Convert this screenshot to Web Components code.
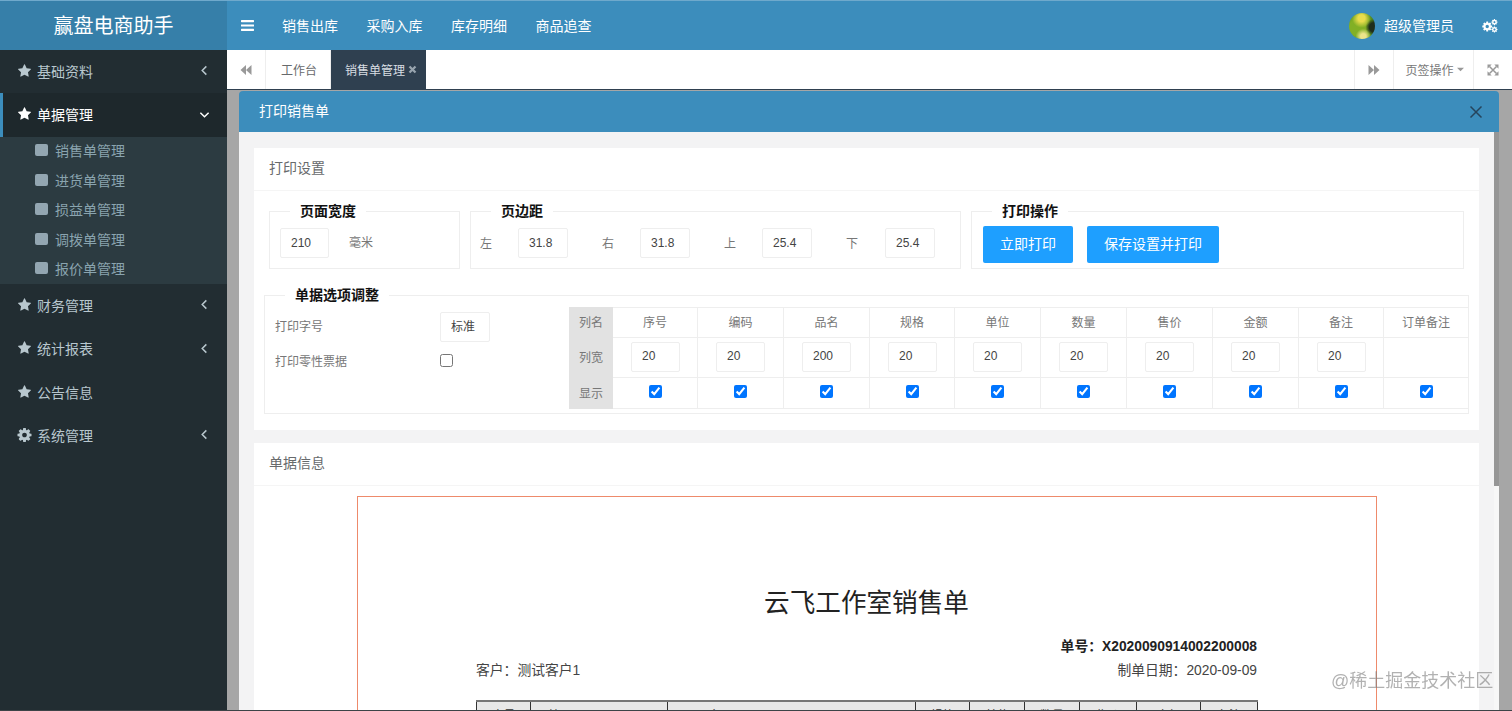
<!DOCTYPE html>
<html lang="zh-CN">
<head>
<meta charset="utf-8">
<title>打印销售单</title>
<style>
html,body{margin:0;height:100%;overflow:hidden}
body{font-family:"Liberation Sans","Noto Sans CJK SC",sans-serif;background:#a6a6a6}
</style>
</head>
<body>
<x-app>
  <x-logo slot="logo">赢盘电商助手</x-logo>
  <x-topbar slot="top"></x-topbar>
  <x-sidebar slot="side">
    <x-nav-item icon="star" arrow="left">基础资料</x-nav-item>
    <x-nav-item icon="star" arrow="down" active>单据管理</x-nav-item>
    <x-sub-menu>
      <x-sub-item>销售单管理</x-sub-item>
      <x-sub-item>进货单管理</x-sub-item>
      <x-sub-item>损益单管理</x-sub-item>
      <x-sub-item>调拨单管理</x-sub-item>
      <x-sub-item>报价单管理</x-sub-item>
    </x-sub-menu>
    <x-nav-item icon="star" arrow="left">财务管理</x-nav-item>
    <x-nav-item icon="star" arrow="left">统计报表</x-nav-item>
    <x-nav-item icon="star">公告信息</x-nav-item>
    <x-nav-item icon="cog" arrow="left">系统管理</x-nav-item>
  </x-sidebar>
  <x-tabbar slot="main"></x-tabbar>
  <x-modal slot="main" heading="打印销售单">
    <x-card heading="打印设置">
      <x-print-settings></x-print-settings>
    </x-card>
    <x-card heading="单据信息">
      <x-invoice></x-invoice>
    </x-card>
  </x-modal>
</x-app>
<x-watermark>@稀土掘金技术社区</x-watermark>

<script>
const GEAR="M1152 896q0-106-75-181t-181-75-181 75-75 181 75 181 181 75 181-75 75-181zm512-109v222q0 12-8 23t-20 13l-185 28q-19 54-39 91 35 50 107 138 10 12 10 25t-9 23q-27 37-99 108t-94 71q-12 0-26-9l-138-108q-44 23-91 38-16 136-29 186-7 28-36 28h-222q-14 0-24.5-8.5t-11.5-21.5l-28-184q-49-16-90-37l-141 107q-10 9-25 9-14 0-25-11-126-114-165-168-7-10-7-23 0-12 8-23 15-21 51-66.5t54-70.5q-27-50-41-99l-183-27q-13-2-21-12.5t-8-23.5v-222q0-12 8-23t19-13l186-28q14-46 39-92-40-57-107-138-10-12-10-24 0-10 9-23 26-36 98.5-107.5t94.5-71.5q13 0 26 10l138 107q44-23 91-38 16-136 29-186 7-28 36-28h222q14 0 24.5 8.5t11.5 21.5l28 184q49 16 90 37l142-107q9-9 24-9 13 0 25 10 129 119 165 170 7 8 7 22 0 12-8 23-15 21-51 66.5t-54 70.5q26 50 41 98l183 28q13 2 21 12.5t8 23.5z";
const ICONS={
  star:`<svg viewBox="0 0 1792 1792"><path fill="currentColor" d="M1728 647q0 22-26 48l-363 354 86 500q1 7 1 20 0 21-10.5 35.5t-30.5 14.5q-19 0-40-12l-449-236-449 236q-22 12-40 12-21 0-31.5-14.5t-10.5-35.5q0-6 2-20l86-500-364-354q-25-27-25-48 0-37 56-46l502-73 225-455q19-41 49-41t49 41l225 455 502 73q56 9 56 46z"/></svg>`,
  cog:`<svg viewBox="128 128 1536 1536"><path fill="currentColor" d="${GEAR}"/></svg>`,
  cogs:`<svg viewBox="0 0 1792 1536"><g fill="currentColor"><path transform="translate(-60 180) scale(.72)" d="${GEAR}"/><path transform="translate(1000 -60) scale(.44)" d="${GEAR}"/><path transform="translate(1000 760) scale(.44)" d="${GEAR}"/></g></svg>`,
  bars:`<svg viewBox="128 256 1536 1280"><path fill="currentColor" d="M1664 1344v128q0 26-19 45t-45 19h-1408q-26 0-45-19t-19-45v-128q0-26 19-45t45-19h1408q26 0 45 19t19 45zm0-512v128q0 26-19 45t-45 19h-1408q-26 0-45-19t-19-45v-128q0-26 19-45t45-19h1408q26 0 45 19t19 45zm0-512v128q0 26-19 45t-45 19h-1408q-26 0-45-19t-19-45v-128q0-26 19-45t45-19h1408q26 0 45 19t19 45z"/></svg>`,
  left:`<svg viewBox="0 0 12 12"><path fill="none" stroke="currentColor" stroke-width="1.6" d="M8 1.5 3.5 6 8 10.5"/></svg>`,
  down:`<svg viewBox="0 0 12 12"><path fill="none" stroke="currentColor" stroke-width="1.6" d="M1.5 4 6 8.5 10.500 4"/></svg>`,
  back:`<svg viewBox="0 0 12 12"><path fill="currentColor" d="M6 1v10L.5 6zM11.500 1v10L6 6z"/></svg>`,
  fwd:`<svg viewBox="0 0 12 12"><path fill="currentColor" d="M6 1v10l5.500-5zM.5 1v10L6 6z"/></svg>`,
  close:`<svg viewBox="0 0 12 12"><path fill="none" stroke="currentColor" stroke-width="3" d="M2 2l8 8M10 2l-8 8"/></svg>`,
  thin:`<svg viewBox="0 0 14 14"><path fill="none" stroke="currentColor" stroke-width="1.5" d="M1.500 1.500l11 11M12.500 1.500l-11 11"/></svg>`,
  caret:`<svg viewBox="0 0 8 5"><path fill="currentColor" d="M0 .5h8L4 4.500z"/></svg>`,
  expand:`<svg viewBox="0 0 12 12"><path fill="none" stroke="currentColor" stroke-width="1.5" d="M2.500 2.500l7 7M9.500 2.500l-7 7"/><path fill="currentColor" d="M.5.500h4.200L.5 4.700zM11.500.5v4.200L7.300.5zM.5 11.500V7.300L4.700 11.500zM11.500 11.500H7.300L11.500 7.300z"/></svg>`
};
function el(name,css,render){
  customElements.define(name,class extends HTMLElement{
    connectedCallback(){
      if(this.shadowRoot)return;
      const r=this.attachShadow({mode:"open"});
      r.innerHTML=`<style>${css}</style>`+render(this);
    }
  });
}
el("x-icon",`:host{display:inline-flex;width:14px;height:14px;flex:none}svg{display:block;width:100%;height:100%}`,
  h=>ICONS[h.getAttribute("name")]);

el("x-app",`
  :host{display:grid;grid-template-columns:227px 1fr;grid-template-rows:50px 1fr;height:711px;box-sizing:border-box;overflow:hidden;border-bottom:1px solid #3d4347;background:#a6a6a6}
  .logo{grid-column:1;grid-row:1;display:flex;min-width:0}
  .top{grid-column:2;grid-row:1;display:flex;min-width:0}
  .side{grid-column:1;grid-row:2;display:flex;min-height:0}
  .main{grid-column:2;grid-row:2;display:flex;flex-direction:column;min-height:0;min-width:0;overflow:hidden}
`,()=>`<div class="logo"><slot name="logo"></slot></div><div class="top"><slot name="top"></slot></div><div class="side"><slot name="side"></slot></div><div class="main"><slot name="main"></slot></div>`);

el("x-logo",`:host{flex:1;display:flex;align-items:center;justify-content:center;background:#367fa9;color:#fff;font-size:20px;border-top:1px solid #6fa9cc;box-sizing:border-box;padding-bottom:2px}`,()=>`<slot></slot>`);

el("x-topbar",`
  :host{flex:1;display:flex;align-items:center;background:#3c8dbc;color:#fff;font-size:14px;border-top:1px solid #6fa9cc;box-sizing:border-box;padding:0 14px}
  x-icon.bars{width:13px;height:11px;margin-right:28px}
  nav{display:flex;gap:28.500px}
  nav span,.name{padding-bottom:2px}
  .sp{flex:1}
  .avatar{width:26px;height:26px;border-radius:50%;margin-right:9px;background:
    radial-gradient(circle at 48% 20%,#e8dc4c 0 14%,transparent 38%),
    radial-gradient(circle at 55% 90%,#ece48a 0 10%,transparent 28%),
    radial-gradient(circle at 96% 55%,#1f2d1c 0 16%,transparent 30%),
    radial-gradient(circle at 35% 55%,#82b025 0 38%,#4a861a 80%)}
  x-icon.cogs{width:16px;height:14px;margin-left:28px}
`,()=>`<x-icon class="bars" name="bars"></x-icon>
  <nav><span>销售出库</span><span>采购入库</span><span>库存明细</span><span>商品追查</span></nav>
  <span class="sp"></span><span class="avatar"></span><span class="name">超级管理员</span><x-icon class="cogs" name="cogs"></x-icon>`);

el("x-sidebar",`:host{flex:1;display:flex;flex-direction:column;background:#222d32}`,()=>`<slot></slot>`);

el("x-nav-item",`
  :host{display:flex;align-items:center;height:43.300px;box-sizing:border-box;padding:0 17px 2px 17px;color:#b8c7ce;font-size:14px;flex:none}
  :host([active]){background:#1e282c;color:#fff;border-left:3px solid #3c8dbc;padding-left:14px;height:44px}
  x-icon.i{width:15px;height:14px;margin-right:5px}
  .t{flex:1}
  x-icon.a{width:11px;height:11px}
`,h=>`<x-icon class="i" name="${h.getAttribute("icon")}"></x-icon><span class="t"><slot></slot></span>${h.getAttribute("arrow")?`<x-icon class="a" name="${h.getAttribute("arrow")}"></x-icon>`:""}`);

el("x-sub-menu",`:host{display:flex;flex-direction:column;background:#2c3b41;height:147px;flex:none}`,()=>`<slot></slot>`);
el("x-sub-item",`
  :host{display:flex;align-items:center;height:29.400px;box-sizing:border-box;padding:0 0 3px 35px;flex:none;color:#8aa4af;font-size:14px}
  i{width:13px;height:12px;border-radius:2px;background:#93a6b1;margin-right:7px}
`,()=>`<i></i><slot></slot>`);

el("x-tabbar",`
  :host{display:flex;height:40px;flex:none;background:#fff;border-bottom:1px solid #2f4050;box-sizing:border-box;font-size:12px;color:#676a6c}
  .b{display:flex;align-items:center;justify-content:center;border-right:1px solid #eee;box-sizing:border-box;color:#999}
  .b x-icon{width:12px;height:12px}
  .tab{display:flex;align-items:center;color:#676a6c}
  .sp{flex:1;border-right:1px solid #eee}
  .act{background:#2f4050;color:#d8dee3;width:95px;justify-content:flex-start;padding-left:14px;box-sizing:border-box}
  .act x-icon{width:9px;height:9px;margin-left:3px;color:#98a4ae}
  .b x-icon.cap{width:7px;height:5px;margin-left:3px;color:#999}
`,()=>`<div class="b" style="width:39px"><x-icon name="back"></x-icon></div>
  <div class="b tab" style="width:65px;padding-left:2px">工作台</div>
  <div class="tab act">销售单管理<x-icon name="close"></x-icon></div>
  <div class="sp"></div>
  <div class="b" style="width:39px"><x-icon name="fwd"></x-icon></div>
  <div class="b" style="width:80px;color:#777;padding-left:2px">页签操作<x-icon class="cap" name="caret"></x-icon></div>
  <div class="b" style="width:38px;border:0"><x-icon name="expand"></x-icon></div>`);

el("x-modal",`
  :host{display:flex;flex-direction:column;width:1260px;margin:1px 0 0 12px;flex:1;min-height:0;border-radius:4px 4px 0 0;overflow:hidden}
  header{display:flex;align-items:center;height:41px;flex:none;background:#3c8dbc;color:#fff;font-size:14px;padding:0 16px 0 20px}
  header span{flex:1;padding-bottom:3px}
  x-icon{width:14px;height:14px;color:#26445c}
  .wrap{flex:1;display:flex;min-height:0}
  .body{flex:1;display:flex;flex-direction:column;gap:13px;padding:16px 15px 0;overflow:hidden;background:#f3f3f4;min-width:0}
  .track{width:5px;flex:none;background:#f7f7f7}
  .thumb{height:354px;background:#969696}
`,h=>`<header><span>${h.getAttribute("heading")}</span><x-icon name="thin"></x-icon></header>
  <div class="wrap"><div class="body"><slot></slot></div><div class="track"><div class="thumb"></div></div></div>`);

el("x-card",`
  :host{display:block;background:#fff;flex:none}
  h3{margin:0;height:43px;line-height:40px;box-sizing:border-box;padding-left:15px;font-size:14px;font-weight:400;color:#676a6c;border-bottom:1px solid #f5f5f5}
`,h=>`<h3>${h.getAttribute("heading")}</h3><slot></slot>`);

el("x-fieldset",`
  :host{display:flex;min-width:0}
  fieldset{flex:1;margin:0;padding:0;border:1px solid #eee;min-width:0}
  legend{margin-left:20px;padding:0 10px;font-size:14px;line-height:20px;font-weight:700;color:#111}
`,h=>`<fieldset><legend>${h.getAttribute("legend")}</legend><slot></slot></fieldset>`);

el("x-field",`
  :host{display:flex;align-items:center;box-sizing:border-box;width:49px;height:30px;border:1px solid #eee;border-radius:2px;padding:0 0 1px 10px;font-size:12px;color:#444;background:#fff}
`,()=>`<slot></slot>`);

el("x-print-settings",`
  :host{display:flex;flex-direction:column;gap:16px;padding:10px 10px 16px}
  .r1{display:grid;grid-template-columns:191px 491px 493px;gap:10px;padding:0 5px}
  .pad{display:flex;align-items:center;padding:7px 0 10px 10px;font-size:12px;color:#777}
  .pad span{margin-left:20px;padding-bottom:3px}
  .mar{display:grid;grid-template-columns:repeat(3,122px) 130px;padding:7px 0 10px 9px;font-size:12px;color:#777}
  .mar div{display:flex;align-items:center}
  .mar b{font-weight:400;width:38px;padding-bottom:2px}
  .mar div:last-child b{width:39px}
  .mar x-field{width:50px}
  .btns{display:flex;gap:14px;padding:5px 0 5px 11px}
  button{height:37px;padding:0 0 3px;border:0;border-radius:2px;background:#1e9fff;color:#fff;font:14px "Liberation Sans","Noto Sans CJK SC",sans-serif}
  .opts{display:flex;height:108px}
  .left{width:304px;flex:none;box-sizing:border-box;padding:7px 0 0 10px;display:grid;grid-template-columns:165px auto;grid-template-rows:30px 24px;row-gap:6px;align-items:center;font-size:12px;color:#777;align-content:start}
  .left span{padding-bottom:3px}
  .left span.l2{padding-bottom:0}
  input{margin:0;width:13px;height:13px;display:block}
  table{border-collapse:collapse;table-layout:fixed;width:899px;height:101px;margin-top:2px;font-size:12px;color:#777;text-align:center;align-self:flex-start}
  td{border:1px solid #eee;padding:0 0 2px}
  td:first-child{background:#e2e2e2;border-color:#e2e2e2}
  tr:nth-child(1){height:30px}tr:nth-child(2){height:40px}tr:nth-child(3){height:31px}
  td x-field{margin-left:18px}
  td input{margin:0 auto 2px}
`,()=>{
  const cols=["序号","编码","品名","规格","单位","数量","售价","金额","备注","订单备注"];
  const w=[20,20,200,20,20,20,20,20,20];
  const cw=[43,85,86,86,85,86,86,86,86,85,85];
  return `<div class="r1">
    <x-fieldset legend="页面宽度"><div class="pad"><x-field>210</x-field><span>毫米</span></div></x-fieldset>
    <x-fieldset legend="页边距"><div class="mar">
      <div><b>左</b><x-field>31.8</x-field></div><div><b>右</b><x-field>31.8</x-field></div>
      <div><b>上</b><x-field>25.4</x-field></div><div><b>下</b><x-field>25.4</x-field></div>
    </div></x-fieldset>
    <x-fieldset legend="打印操作"><div class="btns"><button style="width:90px">立即打印</button><button style="width:132px">保存设置并打印</button></div></x-fieldset>
  </div>
  <x-fieldset legend="单据选项调整"><div class="opts">
    <div class="left"><span>打印字号</span><x-field style="width:50px;padding-bottom:3px">标准</x-field><span class="l2">打印零性票据</span><input type="checkbox"></div>
    <table>
      <colgroup>${cw.map(x=>`<col style="width:${x}px">`).join("")}</colgroup>
      <tr><td>列名</td>${cols.map(c=>`<td>${c}</td>`).join("")}</tr>
      <tr><td>列宽</td>${cols.map((c,i)=>`<td>${w[i]!==undefined?`<x-field>${w[i]}</x-field>`:""}</td>`).join("")}</tr>
      <tr><td>显示</td>${cols.map(()=>`<td><input type="checkbox" checked></td>`).join("")}</tr>
    </table>
  </div></x-fieldset>`;
});

el("x-invoice",`
  :host{display:block;padding:10px 0 0 103px}
  .paper{box-sizing:border-box;width:1020px;height:400px;border:1px solid #ee8a6b;border-bottom:0;padding:89px 119px 0 118px}
  h1{margin:0;height:34px;line-height:34px;font-size:25.600px;font-weight:400;color:#222;text-align:center}
  .no{margin-top:17px;line-height:20px;font-size:13.800px;font-weight:700;color:#222;text-align:right}
  .meta{display:flex;justify-content:space-between;margin-top:4px;line-height:20px;font-size:13.800px;color:#444}
  table{margin-top:19px;width:781px;border-collapse:collapse;table-layout:fixed;font-size:12px;color:#333}
  th{background:#e8e8e8;border:1px solid #333;border-top:2px solid #777;font-weight:400;padding:7px 0 2px;text-align:center;line-height:14px}
  th.l{text-align:left}
`,()=>{
  const c=[["序号",54],["编码",137,17],["品名",248,29],["规格",54],["单位",55],["数量",55],["售价",57],["金额",64],["备注",57]];
  return `<div class="paper"><h1>云飞工作室销售单</h1>
    <div class="no">单号：X2020090914002200008</div>
    <div class="meta"><span>客户：测试客户1</span><span>制单日期：2020-09-09</span></div>
    <table><tr>${c.map(x=>`<th ${x[2]?`class="l" style="padding-left:${x[2]}px;width:${x[1]}px;box-sizing:border-box"`:`style="width:${x[1]}px;box-sizing:border-box"`}>${x[0]}</th>`).join("")}</tr></table>
  </div>`;
});

el("x-watermark",`:host{position:fixed;left:1331px;top:670px;font-size:18px;line-height:22px;color:rgba(120,120,120,.58);white-space:nowrap}`,()=>`<slot></slot>`);
</script>
</body>
</html>
